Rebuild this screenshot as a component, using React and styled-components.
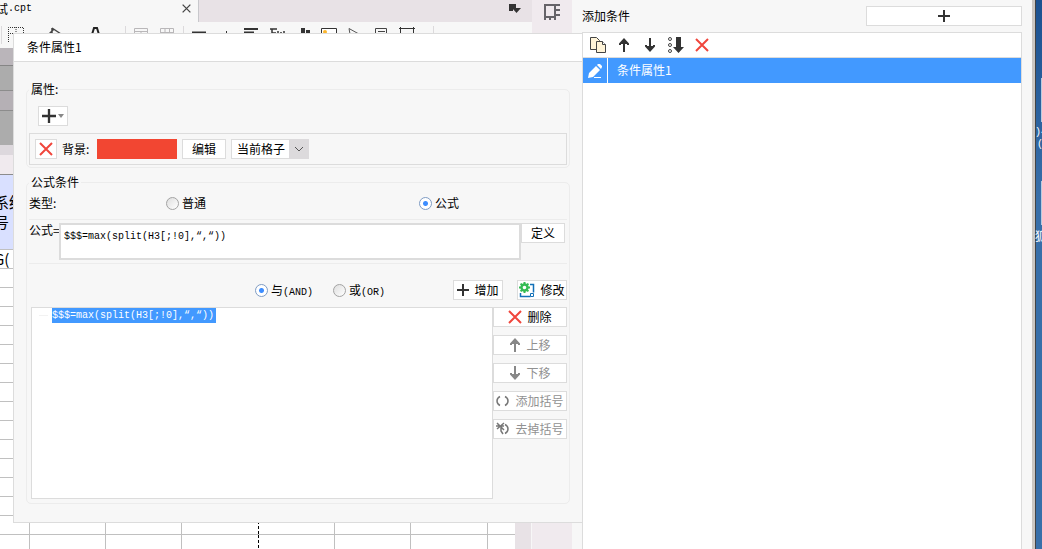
import { useState } from "react";
import styled, { createGlobalStyle } from "styled-components";

const GlobalStyle = createGlobalStyle`
  * {
    box-sizing: border-box;
  }

  body {
    margin: 0;
    overflow: hidden;
    font-family: "Noto Sans CJK SC", sans-serif;
    font-size: 12px;
    line-height: 18px;
    color: #000;
  }

  button, input, select, textarea {
    margin: 0;
    font: inherit;
    color: inherit;
  }

  svg {
    display: block;
    flex: none;
  }
`;

const Screen = styled.div`
  display: flex;
  height: 100vh;
  overflow: hidden;
  background-color: #f7f7f7;
`;

const Mono = styled.span`
  font-family: "Liberation Mono", monospace;
  font-size: 10px;
  line-height: 12px;
`;

/* ---------- designer behind the dialogs ---------- */

const Designer = styled.div`
  position: relative;
  z-index: 1;
  display: flex;
  flex: 572 1 0;
  min-width: 0;
`;

const Workspace = styled.div`
  display: flex;
  flex-direction: column;
  flex: 1;
  min-width: 0;
`;

const TabBar = styled.div`
  display: flex;
  justify-content: space-between;
  height: 22px;
  flex: none;
  background-color: #e8e2e6;
`;

const Tab = styled.div`
  display: flex;
  justify-content: space-between;
  width: 199px;
  padding-right: 7px;
  background-color: #f7f7f7;
  border-right: 1px solid #c8c8cc;
`;

const TabName = styled.span`
  display: flex;
  align-items: center;
  justify-content: flex-end;
  width: 32px;
  height: 18px;
  overflow: hidden;
  white-space: nowrap;
`;

const PlainBtn = styled.button`
  display: flex;
  align-items: center;
  justify-content: center;
  padding: 0;
  border: none;
  background: none;
`;

const TabClose = styled(PlainBtn)`
  height: 16px;
`;

const TabMenu = styled(PlainBtn)`
  height: 16px;
  margin-right: 11px;
`;

const Toolbar = styled.div`
  display: flex;
  align-items: center;
  height: 26px;
  flex: none;
  background-color: #f7f7f7;
`;

const Tool = styled(PlainBtn)`
  flex: none;
  margin-left: ${(props) => props.$gap}px;
`;

const Separator = styled.span`
  width: 1px;
  height: 18px;
  flex: none;
  margin-left: ${(props) => props.$gap}px;
  background-color: #dcdadc;
`;

const Canvas = styled.div`
  display: flex;
  flex: 1;
  min-height: 0;
`;

const Sheet = styled.div`
  flex: 1;
  min-width: 0;
  overflow: hidden;
  background-color: #fff;
`;

const Band = styled.div`
  height: ${(props) => props.$height}px;
  background-color: ${(props) => props.$color};
  border-bottom: 1px solid ${(props) => props.$line || props.$color};
`;

const SheetRow = styled.div`
  display: grid;
  grid-template-columns: 30px 76px 76px 77px 76px 76px 77px 1fr;
  height: ${(props) => props.$height || 19}px;
  background-color: ${(props) => props.$color || "#fff"};
  border-bottom: 1px solid #c0c0c0;
`;

const Cell = styled.div`
  display: flex;
  flex-direction: column;
  align-items: flex-start;
  justify-content: center;
  overflow: hidden;
  font-size: 15px;
  line-height: 20px;
  white-space: nowrap;
  border-right: 1px ${(props) => (props.$pageBreak ? "dashed #000" : "solid #c0c0c0")};

  &:last-child {
    border-right: none;
  }

  /* the sheet is scrolled a little to the right */
  span {
    margin-left: -6px;
  }
`;

const Scrollbar = styled.div`
  width: 17px;
  background-color: #e8e2e6;
  border-right: 1px solid #f7f7f7;
`;

const Rail = styled.div`
  display: flex;
  justify-content: center;
  align-items: flex-start;
  width: 40px;
  padding-top: 4px;
  flex: none;
  background-color: #f0eaee;
`;

/* ---------- condition dialog ---------- */

const Dialog = styled.section`
  position: absolute;
  top: 33px;
  left: 13px;
  right: -10px;
  background-color: #f7f7f7;
  border: 1px solid #dcdcdc;
  border-right: none;
`;

const DialogTitle = styled.h1`
  height: 28px;
  margin: 0;
  padding: 0 13px;
  font-size: 12px;
  font-weight: 400;
  line-height: 26px;
  background-color: #fff;
  border-bottom: 1px solid #dcdcdc;
`;

const DialogBody = styled.form`
  display: flex;
  flex-direction: column;
  gap: 5px;
  padding: 18px 12px;
`;

const Group = styled.fieldset`
  min-width: 0;
  margin: 0;
  padding: 0 2px ${(props) => props.$bottom}px;
  border: 1px solid #ececec;
  border-radius: 5px;

  legend {
    margin-left: 0;
    padding: 0 2px;
    line-height: 18px;
  }
`;

const Btn = styled.button`
  display: flex;
  align-items: center;
  justify-content: center;
  gap: ${(props) => props.$gap || 5}px;
  width: ${(props) => (props.$width ? `${props.$width}px` : "100%")};
  height: 20px;
  padding: 0;
  flex: none;
  line-height: 18px;
  white-space: nowrap;
  background-color: #fff;
  border: 1px solid #dcdcdc;

  &:disabled {
    color: #919191;
  }
`;

const AddRow = styled.div`
  padding: 8px 9px 7px;
`;

const PropertyRow = styled.div`
  display: flex;
  align-items: center;
  gap: 5px;
  height: 32px;
  padding: 0 5px;
  border: 1px solid #dcdcdc;
`;

const PropertyName = styled.span`
  width: 30px;
`;

const Swatch = styled.button`
  width: 80px;
  height: 20px;
  padding: 0;
  border: none;
  background-color: #f24632;
`;

const SelectBox = styled.span`
  position: relative;
  width: 78px;
  height: 20px;
`;

const Select = styled.select`
  display: block;
  width: 100%;
  height: 100%;
  padding: 0 20px 0 5px;
  appearance: none;
  line-height: 16px;
  background-color: #fff;
  border: 1px solid #dcdcdc;
  border-radius: 0;
`;

const SelectArrow = styled.span`
  position: absolute;
  top: 0;
  right: 0;
  display: flex;
  align-items: center;
  justify-content: center;
  width: 20px;
  height: 20px;
  pointer-events: none;
  background-color: #dcdadc;
`;

const TypeRow = styled.div`
  display: grid;
  grid-template-columns: 137px 253px 1fr;
  align-items: center;
  height: 29px;
  padding-bottom: 4px;
  border-bottom: 1px solid #ececec;
`;

const RadioLabel = styled.label`
  display: flex;
  align-items: center;
  gap: 3px;
`;

const Radio = styled.input`
  appearance: none;
  width: 13px;
  height: 13px;
  border: 1px solid #a3a3a3;
  border-radius: 50%;
  background: linear-gradient(135deg, #dedede, #fff);

  &:checked {
    border-color: #7f9cc4;
    background: radial-gradient(circle, #3d8dff 0 2px, #fff 3px);
  }
`;

const FormulaRow = styled.div`
  display: flex;
  align-items: flex-start;
  padding: 3px 2px 3px 0;
  border-bottom: 1px solid #ececec;
`;

const FormulaLabel = styled.label`
  width: 30px;
  line-height: 14px;
  white-space: nowrap;
`;

const FormulaInput = styled.textarea`
  flex: 1;
  min-width: 0;
  height: 37px;
  padding: 5px 3px;
  resize: none;
  outline: none;
  overflow: hidden;
  font-family: "Liberation Mono", monospace;
  font-size: 10px;
  line-height: 14px;
  background-color: #fff;
  border: 2px solid #dcdcdc;
  border-radius: 0;
`;

const JoinRow = styled.div`
  display: flex;
  align-items: center;
  justify-content: flex-end;
  gap: 14px;
  height: 43px;
  padding-top: 9px;
`;

const JoinOptions = styled.div`
  display: flex;
  gap: 20px;
  margin-right: 54px;
`;

const ListRow = styled.div`
  display: flex;
  padding-left: 2px;
`;

const ConditionList = styled.ul`
  flex: 1;
  height: 192px;
  margin: 0;
  padding: 0 0 0 7px;
  list-style: none;
  background-color: #fff;
  border: 1px solid #dcdcdc;
`;

const Condition = styled.li`
  display: flex;
  align-items: center;
  gap: 4px;

  &::before {
    content: "";
    width: 9px;
    height: 1px;
    background-color: #f2f2f2;
  }
`;

const ConditionText = styled.span`
  height: 15px;
  padding-right: 2px;
  font-family: "Liberation Mono", monospace;
  font-size: 10px;
  line-height: 15px;
  color: #fff;
  background-color: #4299ff;
`;

const Actions = styled.div`
  display: flex;
  flex-direction: column;
  gap: 8px;
  width: 74px;
`;

/* ---------- condition list on the right ---------- */

const SidePanel = styled.aside`
  display: flex;
  flex-direction: column;
  flex: 440 1 20px;
  min-width: 0;
  padding: 6px 10px 0;
`;

const SideHead = styled.div`
  display: flex;
  justify-content: space-between;
  height: 26px;

  h2 {
    margin: 0;
    font-size: 12px;
    font-weight: 400;
    line-height: 20px;
  }
`;

const SideList = styled.div`
  flex: 1;
  background-color: #fff;
  border: 1px solid #dcdcdc;
  border-bottom: none;
`;

const SideTools = styled.div`
  display: flex;
  align-items: center;
  height: 25px;
  padding-left: 6px;
  border-bottom: 1px solid #dcdcdc;
`;

const SideTool = styled(PlainBtn)`
  width: 26px;
  height: 24px;

  &:first-child {
    width: 18px;
    margin-right: 4px;
  }
`;

const SideItem = styled.div`
  display: flex;
  height: 25px;
  line-height: 24px;
  color: #fff;
  background-color: #4299ff;
`;

const EditMark = styled.span`
  display: flex;
  align-items: center;
  justify-content: center;
  width: 25px;
  margin-right: 9px;
  border-right: 1px solid #fff;
`;

const Desktop = styled.div`
  display: flex;
  flex-direction: column;
  width: 10px;
  flex: none;
  overflow: hidden;
  color: #fff;
  line-height: 12px;
  border-left: 3px solid #cbc7c3;
  background: linear-gradient(#1c5190, #386fa9 200px);
  box-shadow: inset 1px 0 #444;
`;

const Shortcut = styled.div`
  display: flex;
  flex-direction: column;
  align-items: flex-start;
  height: 103px;
  padding-top: ${(props) => props.$top || 0}px;
  box-sizing: content-box;
  white-space: nowrap;

  &::before {
    content: "";
    align-self: flex-end;
    width: 1px;
    height: 44px;
    margin-bottom: 5px;
    background-color: #b8cbe0;
  }

  span + span {
    padding-left: 2px;
  }
`;

/* ---------- icons ---------- */

const PlusIcon = ({ size = 12 }) => (
  <svg width={size} height={size} viewBox="0 0 12 12">
    <path d="M6 0v12M0 6h12" stroke="#333" strokeWidth="2" fill="none" />
  </svg>
);

const CrossIcon = ({ size = 14, color = "#f0463c", weight = 2 }) => (
  <svg width={size} height={size} viewBox="0 0 14 14">
    <path d="M1 1l12 12M13 1L1 13" stroke={color} strokeWidth={weight} fill="none" />
  </svg>
);

const ArrowIcon = ({ down, color = "#333" }) => (
  <svg width="12" height="14" viewBox="0 0 12 14">
    <path
      d="M5 14V6H3v1H1V5.500L6 0l5 5.500V7H9V6H7v8z"
      fill={color}
      transform={down ? "rotate(180 6 7)" : undefined}
    />
  </svg>
);

const CopyIcon = () => (
  <svg width="18" height="18" viewBox="0 0 18 18">
    <g fill="#fff4d8" stroke="#444">
      <path d="M1.500 1.500h6l3 3v9h-9z" />
      <path d="M7.500 5.500h6l3 3v8h-9z" />
      <path d="M13.500 5.500v3h3" fill="#fff" />
    </g>
  </svg>
);

const SortIcon = () => (
  <svg width="16" height="16" viewBox="0 0 16 16">
    <g fill="none" stroke="#444">
      <circle cx="2" cy="2" r="1.500" />
      <circle cx="2" cy="8" r="1.500" />
      <circle cx="2" cy="14" r="1.500" />
    </g>
    <path d="M8 0h5v10h3l-5.500 6L5 10h3z" fill="#333" />
  </svg>
);

const PencilIcon = () => (
  <svg width="14" height="14" viewBox="0 0 14 14">
    <path d="M0 14l1-5 7-7 4 4-7 7zM9 1l1-1h2l2 2v1l-1 2zM6 13h7v1H6z" fill="#fff" />
  </svg>
);

const ModifyIcon = () => (
  <svg width="16" height="16" viewBox="0 0 16 16">
    <path d="M1.500 11v3.500h10M11 2.500h3.500v8" fill="none" stroke="#1270b8" strokeWidth="1.500" />
    <path d="M11.500 11.500h3v3h-3z" fill="#fff" stroke="#1270b8" />
    <circle cx="5.500" cy="5.500" r="3" fill="#fff" stroke="#34bb53" strokeWidth="2.400" />
    <path
      d="M5.500 0v2M5.500 9v2M0 5.500h2M9 5.500h2M1.600 1.600L3 3M8 8l1.400 1.400M9.400 1.600L8 3M3 8L1.600 9.400"
      stroke="#34bb53"
      strokeWidth="2"
    />
  </svg>
);

const BracketIcon = ({ removed }) => (
  <svg width="14" height="14" viewBox="0 0 14 14" fill="none" stroke="#777" strokeWidth="1.500">
    <path d="M9 2.500q3 1.500 3 4.500t-3 4.500" />
    {removed ? <path d="M1 1l7 7M8 1L1 7M0 4h8M5 5v4l2 3" /> : <path d="M4 2.500Q1 4 1 7t3 4.500" />}
  </svg>
);

const DockIcon = () => (
  <svg width="12" height="11" viewBox="0 0 12 11">
    <path d="M0 1h7v4H4v3H0z" fill="#333" />
    <path d="M3 5h9l-4.500 5z" fill="#333" />
  </svg>
);

const CellIcon = () => (
  <svg width="16" height="16" viewBox="0 0 16 16" fill="none" stroke="#666469" strokeWidth="2">
    <path d="M1 16V1h10v12H1M11 1h5M11 6h5M11 11h5M6 12v4M11 12v4" />
  </svg>
);

const toolDrawings = {
  border: <path d="M.5 15V.5h15V15M8 0v15M0 6.500h16" stroke="#333" strokeDasharray="1 1" />,
  fill: <path d="M4 1v5M4 1l9 6-6 6-6-6 5-5" stroke="#444" strokeWidth="1.500" />,
  font: <path d="M3 14L7 1h3l4 13M5 9h7" stroke="#222" strokeWidth="2" />,
  merge: <path d="M1.500 1.500h13v12h-13zM1 4.500h14M8 4v9" stroke="#b9b7b9" />,
  split: <path d="M1.500 1.500h13v12h-13zM1 5.500h14M6 1v12M10.500 1v12" stroke="#b9b7b9" />,
  line: <path d="M1 5.500h14" stroke="#333" strokeWidth="2" />,
  move: <path d="M8.500 4v8M5 8h7" stroke="#333" />,
  align: <path d="M1 2h14M1 5.500h10M1 9h14" stroke="#333" strokeWidth="2" />,
  text: <path d="M1 2h7M3 2v10M3 6h4M9 4v8M12 5v7M14 5h2" stroke="#333" strokeWidth="1.500" />,
  chart: <path d="M5 1v12M10 3v10" stroke="#333" strokeWidth="4" />,
  image: (
    <>
      <path d="M.5 1.500h15v12H.5z" fill="#fff" stroke="#333" />
      <circle cx="4" cy="5" r="2" fill="#fcb62c" />
    </>
  ),
  pointer: <path d="M4 1.500l9 5-5 1-2 5z" stroke="#555" />,
  report: <path d="M2.500 1.500h11v12h-11zM5 4.500h7M5 7.500h7" stroke="#444" />,
  frame: <path d="M0 1.500h16M1.500 0v14M14.500 0v14" stroke="#333" />,
};

// null marks a separator
const tools = [
  [null, 1],
  ["border", 6],
  ["fill", 24],
  ["font", 23],
  [null, 22],
  ["merge", 7],
  ["split", 10],
  [null, 8],
  ["line", 7],
  ["move", 11],
  ["align", 9],
  ["text", 10],
  ["chart", 13],
  ["image", 7],
  ["pointer", 8],
  ["report", 12],
  ["frame", 10],
  [null, 18],
];

const emptyRows = Array.from({ length: 16 }, (_, i) => i);

function Cells({ children }) {
  return [0, 1, 2, 3, 4, 5, 6, 7].map((col) => (
    <Cell key={col} $pageBreak={col === 3}>
      {col === 0 && children}
    </Cell>
  ));
}

function ReportDesigner() {
  return (
    <>
      <Workspace>
        <TabBar>
          <Tab>
            <TabName>
              试<Mono>.cpt</Mono>
            </TabName>
            <TabClose aria-label="close">
              <CrossIcon size={9} color="#444" />
            </TabClose>
          </Tab>
          <TabMenu aria-label="tabs">
            <DockIcon />
          </TabMenu>
        </TabBar>
        <Toolbar>
          {tools.map(([name, gap], i) =>
            name ? (
              <Tool key={name} $gap={gap} aria-label={name}>
                <svg width="16" height="16" viewBox="0 0 16 16" fill="none">
                  {toolDrawings[name]}
                </svg>
              </Tool>
            ) : (
              <Separator key={i} $gap={gap} />
            )
          )}
        </Toolbar>
        <Canvas>
          <Sheet>
            <Band $height={18} $color="#bab5ba" $line="#858585" />
            <Band $height={25} $color="#acacac" $line="#8c8c8c" />
            <Band $height={20} $color="#b5b0b5" $line="#8c8c8c" />
            <Band $height={34} $color="#acacac" />
            <Band $height={10} $color="#ddd8dd" />
            <Band $height={20} $color="#f0eaee" $line="#8c8c8c" />
            <SheetRow $height={75} $color="#d9e0ff">
              <Cells>
                <span>系统</span>
                <span>号</span>
              </Cells>
            </SheetRow>
            <SheetRow>
              <Cells>
                <span>G(</span>
              </Cells>
            </SheetRow>
            {emptyRows.map((row) => (
              <SheetRow key={row}>
                <Cells />
              </SheetRow>
            ))}
          </Sheet>
          <Scrollbar />
        </Canvas>
      </Workspace>
      <Rail>
        <CellIcon />
      </Rail>
    </>
  );
}

function ConditionDialog() {
  const [type, setType] = useState("formula");
  const [join, setJoin] = useState("and");
  const [formula, setFormula] = useState("$$$=max(split(H3[;!0],“,“))");

  return (
    <Dialog>
      <DialogTitle>条件属性1</DialogTitle>
      <DialogBody onSubmit={(e) => e.preventDefault()}>
        <Group $bottom={2}>
          <legend>属性:</legend>
          <AddRow>
            <Btn type="button" $width={30} $gap={2} aria-label="add">
              <PlusIcon size={14} />
              <svg width="6" height="4" viewBox="0 0 6 4">
                <path d="M0 0h6L3 4z" fill="#888" />
              </svg>
            </Btn>
          </AddRow>
          <PropertyRow>
            <Btn type="button" $width={22} aria-label="remove">
              <CrossIcon />
            </Btn>
            <PropertyName>背景:</PropertyName>
            <Swatch type="button" aria-label="color" />
            <Btn type="button" $width={44}>
              编辑
            </Btn>
            <SelectBox>
              <Select aria-label="scope">
                <option>当前格子</option>
              </Select>
              <SelectArrow>
                <svg width="10" height="6" viewBox="0 0 10 6">
                  <path d="M1 1l4 4 4-4" fill="none" stroke="#555" />
                </svg>
              </SelectArrow>
            </SelectBox>
          </PropertyRow>
        </Group>

        <Group $bottom={4}>
          <legend>公式条件</legend>
          <TypeRow>
            <span>类型:</span>
            <RadioLabel>
              <Radio
                type="radio"
                name="type"
                checked={type === "normal"}
                onChange={() => setType("normal")}
              />
              普通
            </RadioLabel>
            <RadioLabel>
              <Radio
                type="radio"
                name="type"
                checked={type === "formula"}
                onChange={() => setType("formula")}
              />
              公式
            </RadioLabel>
          </TypeRow>
          <FormulaRow>
            <FormulaLabel htmlFor="formula">公式=</FormulaLabel>
            <FormulaInput
              id="formula"
              spellCheck={false}
              value={formula}
              onChange={(e) => setFormula(e.target.value)}
            />
            <Btn type="button" $width={44}>
              定义
            </Btn>
          </FormulaRow>
          <JoinRow>
            <JoinOptions>
              <RadioLabel>
                <Radio
                  type="radio"
                  name="join"
                  checked={join === "and"}
                  onChange={() => setJoin("and")}
                />
                <span>
                  与<Mono>(AND)</Mono>
                </span>
              </RadioLabel>
              <RadioLabel>
                <Radio
                  type="radio"
                  name="join"
                  checked={join === "or"}
                  onChange={() => setJoin("or")}
                />
                <span>
                  或<Mono>(OR)</Mono>
                </span>
              </RadioLabel>
            </JoinOptions>
            <Btn type="button" $width={50}>
              <PlusIcon />
              增加
            </Btn>
            <Btn type="button" $width={50}>
              <ModifyIcon />
              修改
            </Btn>
          </JoinRow>
          <ListRow>
            <ConditionList>
              <Condition>
                <ConditionText>{"$$$=max(split(H3[;!0],“,“))"}</ConditionText>
              </Condition>
            </ConditionList>
            <Actions>
              <Btn type="button">
                <CrossIcon />
                删除
              </Btn>
              <Btn type="button" disabled>
                <ArrowIcon color="#888" />
                上移
              </Btn>
              <Btn type="button" disabled>
                <ArrowIcon down color="#888" />
                下移
              </Btn>
              <Btn type="button" disabled>
                <BracketIcon />
                添加括号
              </Btn>
              <Btn type="button" disabled>
                <BracketIcon removed />
                去掉括号
              </Btn>
            </Actions>
          </ListRow>
        </Group>
      </DialogBody>
    </Dialog>
  );
}

function ConditionPanel() {
  return (
    <SidePanel>
      <SideHead>
        <h2>添加条件</h2>
        <Btn type="button" $width={156} aria-label="add condition">
          <PlusIcon />
        </Btn>
      </SideHead>
      <SideList>
        <SideTools>
          <SideTool aria-label="copy">
            <CopyIcon />
          </SideTool>
          <SideTool aria-label="up">
            <ArrowIcon />
          </SideTool>
          <SideTool aria-label="down">
            <ArrowIcon down />
          </SideTool>
          <SideTool aria-label="sort">
            <SortIcon />
          </SideTool>
          <SideTool aria-label="delete">
            <CrossIcon />
          </SideTool>
        </SideTools>
        <SideItem>
          <EditMark>
            <PencilIcon />
          </EditMark>
          条件属性1
        </SideItem>
      </SideList>
    </SidePanel>
  );
}

function App() {
  return (
    <Screen>
      <GlobalStyle />
      <Designer>
        <ReportDesigner />
        <ConditionDialog />
      </Designer>
      <ConditionPanel />
      <Desktop>
        <Shortcut $top={78}>
          <Mono>)4</Mono>
          <Mono>(</Mono>
        </Shortcut>
        <Shortcut>狐</Shortcut>
      </Desktop>
    </Screen>
  );
}

export default App;
